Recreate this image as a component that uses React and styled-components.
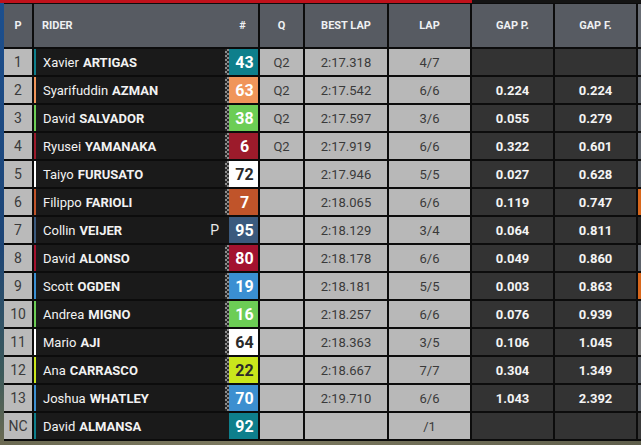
import styled, { createGlobalStyle } from "styled-components";

const GlobalStyle = createGlobalStyle`
  html, body {
    margin: 0;
    padding: 0;
    background: #111;
  }
  body {
    font-family: Roboto, "Liberation Sans", sans-serif;
  }
`;

const riders = [
  { pos: "1", first: "Xavier", last: "ARTIGAS", num: "43", color: "#0e7f8c", q: "Q2", best: "2:17.318", lap: "4/7", gapP: "", gapF: "", side: "#5d6269" },
  { pos: "2", first: "Syarifuddin", last: "AZMAN", num: "63", color: "#f0955a", q: "Q2", best: "2:17.542", lap: "6/6", gapP: "0.224", gapF: "0.224", side: "#5d6269" },
  { pos: "3", first: "David", last: "SALVADOR", num: "38", color: "#6ccd55", q: "Q2", best: "2:17.597", lap: "3/6", gapP: "0.055", gapF: "0.279", side: "#5d6269" },
  { pos: "4", first: "Ryusei", last: "YAMANAKA", num: "6", color: "#9c1b2b", q: "Q2", best: "2:17.919", lap: "6/6", gapP: "0.322", gapF: "0.601", side: "#5d6269" },
  { pos: "5", first: "Taiyo", last: "FURUSATO", num: "72", color: "#ffffff", dark: true, q: "", best: "2:17.946", lap: "5/5", gapP: "0.027", gapF: "0.628", side: "#5d6269" },
  { pos: "6", first: "Filippo", last: "FARIOLI", num: "7", color: "#c0542a", q: "", best: "2:18.065", lap: "6/6", gapP: "0.119", gapF: "0.747", side: "#d8671c" },
  { pos: "7", first: "Collin", last: "VEIJER", num: "95", color: "#3b5a7e", pit: true, q: "", best: "2:18.129", lap: "3/4", gapP: "0.064", gapF: "0.811", side: "#262626" },
  { pos: "8", first: "David", last: "ALONSO", num: "80", color: "#a3122f", q: "", best: "2:18.178", lap: "6/6", gapP: "0.049", gapF: "0.860", side: "#5d6269" },
  { pos: "9", first: "Scott", last: "OGDEN", num: "19", color: "#3a8fd2", q: "", best: "2:18.181", lap: "5/5", gapP: "0.003", gapF: "0.863", side: "#d8671c" },
  { pos: "10", first: "Andrea", last: "MIGNO", num: "16", color: "#6ccd55", q: "", best: "2:18.257", lap: "6/6", gapP: "0.076", gapF: "0.939", side: "#5d6269" },
  { pos: "11", first: "Mario", last: "AJI", num: "64", color: "#ffffff", dark: true, q: "", best: "2:18.363", lap: "3/5", gapP: "0.106", gapF: "1.045", side: "#7a7a7a" },
  { pos: "12", first: "Ana", last: "CARRASCO", num: "22", color: "#c9e61c", dark: true, q: "", best: "2:18.667", lap: "7/7", gapP: "0.304", gapF: "1.349", side: "#5d6269" },
  { pos: "13", first: "Joshua", last: "WHATLEY", num: "70", color: "#3c8fd0", q: "", best: "2:19.710", lap: "6/6", gapP: "1.043", gapF: "2.392", side: "#5d6269" },
  { pos: "NC", first: "David", last: "ALMANSA", num: "92", color: "#0e7f8c", noFlag: true, q: "", best: "", lap: "/1", gapP: "", gapF: "", side: "#3a3a3a" },
];

const Page = styled.div`
  width: 641px;
  height: 445px;
  overflow: hidden;
  background: linear-gradient(90deg, #6b6a52, #7d7a60 40%, #5f5f4c);
`;

const TopBar = styled.div`
  height: 3px;
  background: linear-gradient(90deg, #c0111b 472px, #141414 472px);
`;

const Main = styled.div`
  display: flex;
`;

const LeftEdge = styled.div`
  width: 4px;
  height: 438px;
  background: linear-gradient(#1c4f8e, #1d4576 55%, #3d5a5a 85%, #6a6a52);
`;

const Table = styled.div`
  flex: 1;
  display: flex;
  flex-direction: column;
  gap: 2px;
  padding: 1px 0 2px;
  background: #0c0c0c;
`;

const Row = styled.div`
  display: grid;
  grid-template-columns: 28px 224px 43px 82px 81px 81px 81px 1fr;
  column-gap: 2px;
  height: ${(p) => (p.$header ? "43px" : "26px")};
`;

const HeadCell = styled.div`
  background: #575b62;
  color: #eef0f2;
  font-size: 11px;
  font-weight: 700;
  display: flex;
  align-items: center;
  justify-content: ${(p) => (p.$left ? "space-between" : "center")};
  padding: ${(p) => (p.$left ? "0 0 0 8px" : "0")};
`;

const HashMark = styled.span`
  width: 29px;
  text-align: center;
  padding-right: 1px;
`;

const SideCell = styled.div`
  background: ${(p) => p.$color};
`;

const PosCell = styled.div`
  background: #bababa;
  color: #3a3a3a;
  font-size: 14px;
  display: flex;
  align-items: center;
  justify-content: center;
`;

const RiderCell = styled.div`
  display: flex;
  background: #1a1a1a;
  border-left: 2px solid ${(p) => p.$color};
`;

const Name = styled.div`
  flex: 1;
  color: #f2f2f2;
  font-size: 13px;
  padding-left: 7px;
  display: flex;
  align-items: center;
  white-space: nowrap;

  b {
    font-weight: 700;
    margin-left: 4px;
  }
`;

const Pit = styled.span`
  color: #e8e8e8;
  font-size: 14px;
  align-self: center;
  margin-right: 6px;
`;

const Flag = styled.div`
  width: 4px;
  background: conic-gradient(#8c8c8c 25%, #2a2a2a 0 50%, #8c8c8c 0 75%, #2a2a2a 0) 0 0 / 4px 4px;
  visibility: ${(p) => (p.$hidden ? "hidden" : "visible")};
`;

const NumBox = styled.div`
  width: 29px;
  background: ${(p) => p.$color};
  color: ${(p) => (p.$dark ? "#2a2a2a" : "#ffffff")};
  font-size: 16px;
  font-weight: 700;
  display: flex;
  align-items: center;
  justify-content: center;
  padding-left: 2px;
  box-sizing: border-box;
`;

const LightCell = styled.div`
  background: #b8b8b8;
  color: #3a3a3a;
  font-size: 13px;
  display: flex;
  align-items: center;
  justify-content: center;
`;

const DarkCell = styled.div`
  background: #333333;
  color: #f4f4f4;
  font-size: 13px;
  font-weight: 700;
  display: flex;
  align-items: center;
  justify-content: center;
`;

function RiderRow({ r }) {
  return (
    <Row>
      <PosCell>{r.pos}</PosCell>
      <RiderCell $color={r.color}>
        <Name>
          {r.first}
          <b>{r.last}</b>
        </Name>
        {r.pit && <Pit>P</Pit>}
        <Flag $hidden={r.pit || r.noFlag} />
        <NumBox $color={r.color} $dark={r.dark}>
          {r.num}
        </NumBox>
      </RiderCell>
      <LightCell>{r.q}</LightCell>
      <LightCell>{r.best}</LightCell>
      <LightCell>{r.lap}</LightCell>
      <DarkCell>{r.gapP}</DarkCell>
      <DarkCell>{r.gapF}</DarkCell>
      <SideCell $color={r.side} />
    </Row>
  );
}

export default function App() {
  return (
    <Page>
      <GlobalStyle />
      <TopBar />
      <Main>
        <LeftEdge />
        <Table>
          <Row $header>
            <HeadCell>P</HeadCell>
            <HeadCell $left>
              RIDER
              <HashMark>#</HashMark>
            </HeadCell>
            <HeadCell>Q</HeadCell>
            <HeadCell>BEST LAP</HeadCell>
            <HeadCell>LAP</HeadCell>
            <HeadCell>GAP P.</HeadCell>
            <HeadCell>GAP F.</HeadCell>
            <SideCell $color="#686d74" />
          </Row>
          {riders.map((r) => (
            <RiderRow key={r.pos} r={r} />
          ))}
        </Table>
      </Main>
    </Page>
  );
}
